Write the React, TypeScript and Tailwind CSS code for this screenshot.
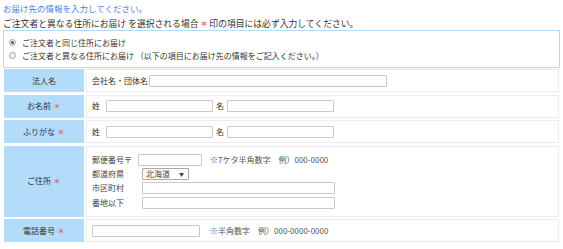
import * as React from "react";

const FONT = { fontFamily: '"Noto Sans CJK JP", "Noto Sans", sans-serif' };

function Req() {
  return <span className="ml-[2px] text-[8px] text-[#e2585f]">＊</span>;
}

function Label({ children, req }: { children: React.ReactNode; req?: boolean }) {
  return (
    <div className="w-[80px] shrink-0 bg-[#b3dcfa] flex items-center justify-center text-[8px] text-[#333]">
      {children}
      {req && <Req />}
    </div>
  );
}

function Field({ w }: { w: string }) {
  return <span className={`inline-block h-[12px] border border-[#c9c9c9] rounded-[1px] bg-white ${w}`} />;
}

function Radio({ checked }: { checked?: boolean }) {
  return (
    <span className="inline-flex w-[7px] h-[7px] rounded-full border border-[#a8a8a8] bg-[#f0f0f0] items-center justify-center mr-[6px]">
      {checked && <span className="w-[3px] h-[3px] rounded-full bg-[#555]" />}
    </span>
  );
}

function Row({ label, req, h, children }: { label: string; req?: boolean; h: string; children: React.ReactNode }) {
  return (
    <div className={`flex gap-[2px] ${h}`}>
      <Label req={req}>{label}</Label>
      <div className="flex-1 border border-[#ececec] bg-white flex items-center pl-[5px] text-[8px] text-[#333]">
        {children}
      </div>
    </div>
  );
}

export default function App() {
  return (
    <div className="w-[563px] h-[249px] bg-white overflow-hidden px-[3px] pt-[3px]" style={FONT}>
      <p className="text-[8.5px] leading-[10px] text-[#4a7fe6]">お届け先の情報を入力してください。</p>
      <p className="mt-[5px] text-[8.8px] leading-[11px] text-[#333]">
        ご注文者と異なる住所にお届け を選択される場合<span className="mx-[1px] text-[#e2585f]">＊</span>印の項目には必ず入力してください。
      </p>
      <div className="mt-[1px] h-[38px] w-[557px] border border-[#b5dcf7] flex flex-col justify-center gap-[3px] pl-[5px] text-[8px] leading-[10px] text-[#333]">
        <div className="flex items-center">
          <Radio checked />
          ご注文者と同じ住所にお届け
        </div>
        <div className="flex items-center">
          <Radio />
          ご注文者と異なる住所にお届け （以下の項目にお届け先の情報をご記入ください。）
        </div>
      </div>

      <div className="mt-[1px] ml-[1px] w-[555px] flex flex-col gap-[2.5px]">
        <Row label="法人名" h="h-[23px]">
          <span className="mr-[1px]">会社名・団体名</span>
          <Field w="w-[238px]" />
        </Row>
        <Row label="お名前" req h="h-[23px]">
          <span className="mr-[6px]">姓</span>
          <Field w="w-[107px]" />
          <span className="mx-[3px]">名</span>
          <Field w="w-[107px]" />
        </Row>
        <Row label="ふりがな" req h="h-[23px]">
          <span className="mr-[6px]">姓</span>
          <Field w="w-[107px]" />
          <span className="mx-[3px]">名</span>
          <Field w="w-[107px]" />
        </Row>
        <Row label="ご住所" req h="h-[71px]">
          <div className="flex flex-col gap-[2px] text-[#444]">
            <div className="flex items-center h-[12px]">
              <span className="w-[46px]">郵便番号〒</span>
              <Field w="w-[64px]" />
              <span className="ml-[8px] text-[#555]">※7ケタ半角数字　例）000-0000</span>
            </div>
            <div className="flex items-center h-[12px]">
              <span className="w-[50px]">都道府県</span>
              <span className="inline-flex items-center justify-between w-[47px] h-[12px] border border-[#a9a9a9] rounded-[1px] bg-white pl-[3px] pr-[4px]">
                <span>北海道</span>
                <span className="text-[5px]">▼</span>
              </span>
            </div>
            <div className="flex items-center h-[12px]">
              <span className="w-[50px]">市区町村</span>
              <Field w="w-[193px]" />
            </div>
            <div className="flex items-center h-[12px] mt-[1px]">
              <span className="w-[50px]">番地以下</span>
              <Field w="w-[193px]" />
            </div>
          </div>
        </Row>
        <Row label="電話番号" req h="h-[23px]">
          <Field w="w-[108px]" />
          <span className="ml-[10px] text-[#555]">※半角数字　例）000-0000-0000</span>
        </Row>
      </div>
    </div>
  );
}
